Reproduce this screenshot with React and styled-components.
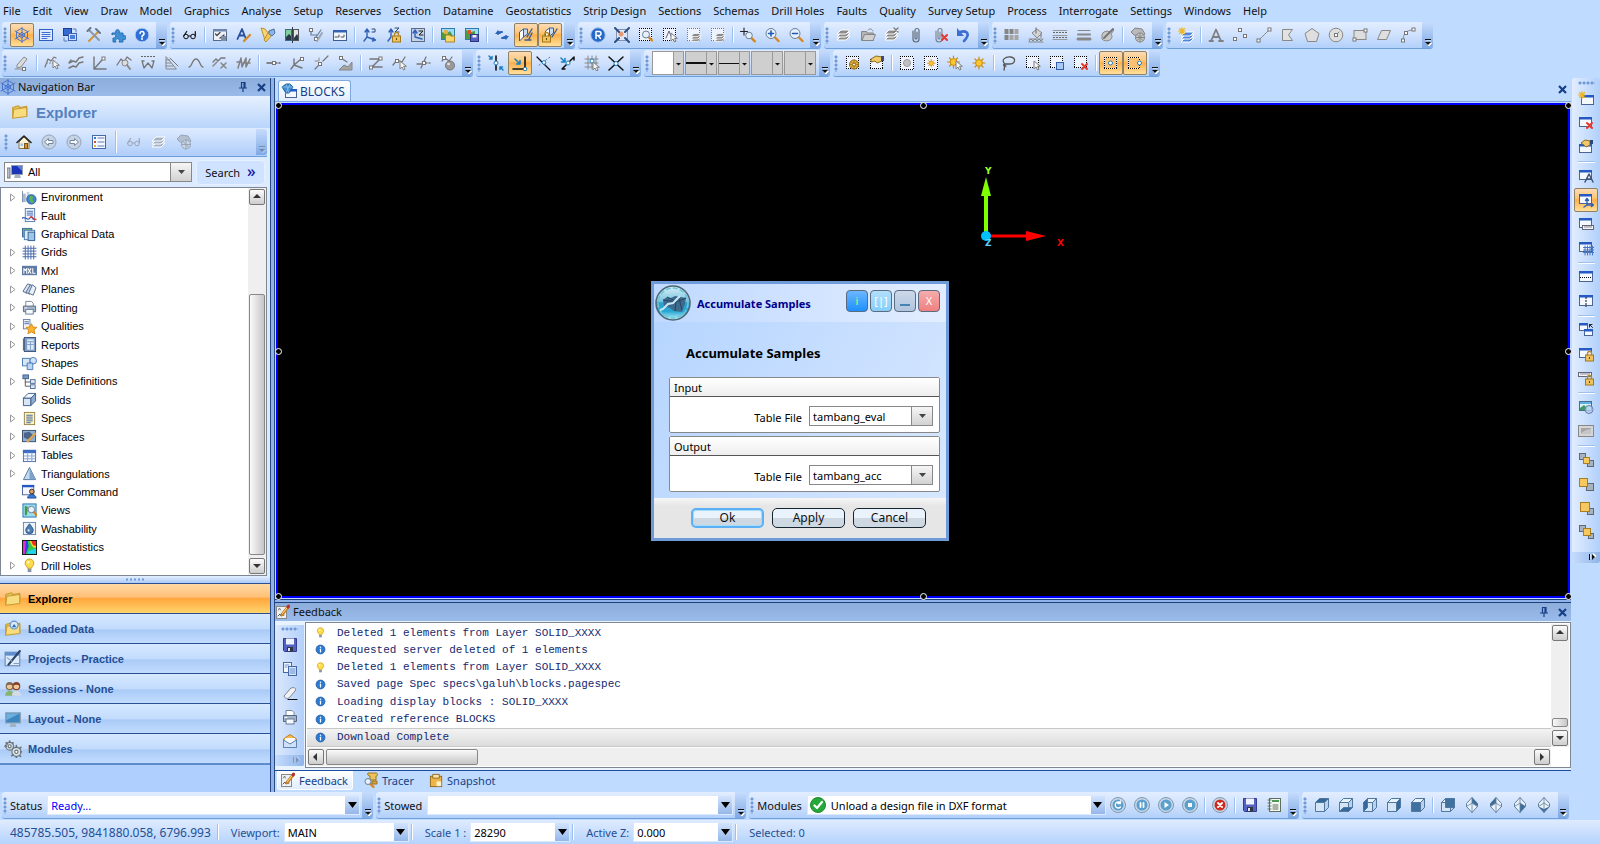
import React, { useState } from "react";
import styled, { createGlobalStyle, css } from "styled-components";

// small drawing helpers, every icon lives in a 16x16 box
const L = (d, c = "#8c8c8c", w = 1) => (
  <path d={d} fill="none" stroke={c} strokeWidth={w} strokeLinecap="round" strokeLinejoin="round" />
);
const F = (d, f, s = "none") => <path d={d} fill={f} stroke={s} strokeLinejoin="round" />;
const C = (x, y, r, f = "#fff", s = "none") => <circle cx={x} cy={y} r={r} fill={f} stroke={s} />;
const R = (x, y, w, h, f = "#fff", s = "none") => (
  <rect x={x} y={y} width={w} height={h} fill={f} stroke={s} />
);
const dots = (x, y, w, h, c = "#000") => (
  <>
    <rect x={x} y={y} width={w} height={h} fill="#eef4ff" stroke="#eef4ff" />
    <path
      d={`M${x - 0.5} ${y}h${w + 1}M${x - 0.5} ${y + h}h${w + 1}M${x} ${y + 1.5}v${h - 2}M${x + w} ${y + 1.5}v${h - 2}`}
      stroke={c}
      strokeDasharray="1 1"
    />
  </>
);
const win = (x = 1.5, y = 2.5, w = 12, h = 9) => (
  <>
    {R(x, y, w, h, "#f4f8ff", "#4a6496")}
    {R(x - 0.5, y - 0.5, w + 1, 2.5, "#2559c4")}
  </>
);
const lens = (x, y, r = 3.5) => (
  <>
    {L(`M${x + r * 0.7} ${y + r * 0.7}L${x + r + 2.5} ${y + r + 2.5}`, "#d9861c", 2.4)}
    {C(x, y, r, "#e4f0fb", "#6d7f93")}
  </>
);
const lock = (x = 6.5, y = 8) => (
  <>
    {L(`M${x + 2} ${y}v-1.5a2 2 0 0 1 4 0v1.5`, "#b58a2b", 1.4)}
    {R(x, y, 8, 6, "#eec35f", "#a47719")}
    {R(x + 3.5, y + 2, 1, 2, "#6b4a08")}
  </>
);
const cross = (x = 9, y = 9, c = "#e8382c") => L(`M${x} ${y}l5 5M${x + 5} ${y}l-5 5`, c, 2);
const pointer = (x = 8, y = 6) =>
  F(`M${x} ${y}v8l2-2 1.5 3 1.5-.8-1.4-2.9h2.8z`, "#f4f4f4", "#7f7f7f");
const layers = (c, y = 0) => (
  <>
    {F(`M1 ${13 + y}h9l4-4H5z`, c, "#fff")}
    {F(`M1 ${10 + y}h9l4-4H5z`, c, "#fff")}
    {F(`M1 ${7 + y}h9l4-4H5z`, c, "#fff")}
  </>
);
const star = (x, y, f = "#ffc531") => (
  <>
    {L(`M${x} ${y - 6}v12M${x - 6} ${y}h12M${x - 4} ${y - 4}l8 8M${x + 4} ${y - 4}l-8 8`, "#c98a12", 1.2)}
    {C(x, y, 3.4, f, "#c98a12")}
  </>
);
const spark = L("M4 .5v7M.5 4h7M1.5 1.5l5 5M6.5 1.5l-5 5", "#f0b51f", 1.1);
const node = (x, y, c = "#777") => R(x - 1.5, y - 1.5, 3, 3, "#fff", c);
const cube = (hi) => (
  <>
    {F("M1.5 5.5h9v9h-9z", hi === "front" ? "#41719f" : "#d4e5f6", "#50779f")}
    {F("M1.5 5.5l4-4h9l-4 4z", hi === "top" ? "#37689c" : "#e9f3fc", "#50779f")}
    {F("M10.5 5.5l4-4v9l-4 4z", hi === "right" ? "#37689c" : "#b9d1ea", "#50779f")}
    {hi === "bottom" && F("M1.5 14.5l4-4h9l-4 4z", "#37689c", "#50779f")}
    {hi === "left" && F("M1.5 5.5l4-4v9l-4 4z", "#37689c", "#50779f")}
    {hi === "back" && F("M5.5 1.5h9v9h-9z", "#41719f", "#50779f")}
  </>
);
const gem = (d) => (
  <>
    {F("M8 .5l5.5 6v3l-5.5 6-5.5-6v-3z", "#e8f1fa", "#64819d")}
    {F(d, "#3f6d99")}
    {L("M8 .5v15M2.500 9.5L8 6l5.500 3.500", "#64819d", 0.8)}
  </>
);
const disc = (c, inner) => (
  <>
    {C(8, 8, 7.5, "#c7d7e6", "#7f98b0")}
    {C(8, 8, 5.5, c)}
    {inner}
  </>
);
const folder = (c1 = "#f9dc7d", c2 = "#c79d35") => (
  <>
    {F("M1.5 13V4l5-1.5 1.5 1.5 6-1v8z", "#e9c25a", c2)}
    {F("M1.5 13.5l1-8 11.5-1.5v8z", c1, c2)}
  </>
);
const floppy = (
  <>
    {F("M1.5 1.5h13v13h-12l-1-1z", "#5462c4", "#343c90")}
    {R(4, 1.5, 8, 6, "#eef3ff")}
    {R(5, 10, 6, 4.5, "#30363f")}
    {R(6, 11, 2, 3, "#dfe5ee")}
  </>
);
const pad = (
  <>
    {R(1.5, 2.5, 10, 12, "#eef1f4", "#888")}
    {L("M3 12l2-2 1 2 3-1", "#555")}
    {L("M3.5 6l1-2 1 2", "#777")}
    {L("M7 10.5l6.5-8", "#c8812b", 3)}
    {L("M7.5 9.5l5.5-7", "#ffe08a", 1)}
    {L("M13 3l.6-.8", "#b8322c", 3)}
  </>
);
const person = (x, c, s) => (
  <>
    {F(`M${x - 4} 14c0-6 8-6 8 0z`, s)}
    {C(x, 5.5, 3, "#f0c699", c)}
    {F(`M${x - 3} 5a3 3 0 0 1 6 0c-2-1-4-1-6 0z`, c)}
  </>
);
const boxes = (a, b) => (
  <>
    {a.map(([x, y, s]) => <React.Fragment key={x}>{R(x, y, s, s, "#a9b3c0", "#5e6875")}</React.Fragment>)}
    {R(b[0], b[1], b[2], b[2], "#f7c760", "#a87e22")}
  </>
);
const wave = "M1 7l3-3 2 2 3-3 4 0";

const icons = {
  wheel: L("M8 1.5l5.5 3v7L8 14.5l-5.5-3v-7zM8 0v16M1 4l14 8M15 4L1 12M5 8l3-3 3 3-3 3z", "#3f6fd0", 0.9),
  console: <>{R(1.5, 2.5, 13, 11, "#dfeaff", "#2c5fc2")}{L("M4 5.5h8M4 7.5h8M4 9.5h8M4 11.5h5", "#3f6fd0")}</>,
  copywin: <>{R(1.5, 1.5, 8, 7, "#3769d2", "#1d3f90")}{R(6.5, 6.5, 8, 7, "#cfe0ff", "#3c62ad")}{R(8, 8, 5, 4, "#4c7fdf")}{L("M2 11v3h3M11 2h3v3", "#5b7db8")}</>,
  tools: <>{L("M3 14L12 5", "#d59234", 2)}{L("M3 3l10 10", "#8b98a8", 2)}{L("M1.5 4l3-3M10 2l4 4", "#6c7785", 2)}</>,
  puzzle: F("M2 6h4a2 2 0 1 1 3 0h4v3a2 2 0 1 1 0 3v3H9a2 2 0 1 0-3 0H3v-4a2 2 0 1 0-1-3z", "#3f8fd6", "#2a6fb0"),
  help: <>{C(8, 8, 7, "#2f6fd8", "#c6d8f2")}{L("M6 6.5a2 2 0 1 1 2.5 2L8 10", "#fff", 1.6)}{C(8, 12, 1)}</>,
  glasses: <>{C(4, 9.5, 2.3, "none", "#111")}{C(11, 9.5, 2.3, "none", "#111")}{L("M1.7 9l3-4.5M13.3 9V4.5M6.3 9h2.5", "#111", 1.2)}</>,
  glassesOff: <>{C(4, 9.5, 2.3, "none", "#9aa7ba")}{C(11, 9.5, 2.3, "none", "#9aa7ba")}{L("M1.7 9l3-4.5M13.3 9V4.5M6.3 9h2.5", "#9aa7ba", 1.2)}</>,
  checks: <>{R(1.5, 2.5, 13, 11, "#eef2f8", "#586a86")}{R(1, 2, 14, 2.5, "#6f86ad")}{L("M3.5 7l1.5 1.5 3-3M8 11l4-3", "#444", 1.3)}{R(9, 9, 5, 5, "#7d8ea8")}</>,
  apen: <>{L("M1.5 12L6 2l3.5 9M3 8.5h5", "#2a4d9b", 1.8)}{L("M8 14l6-6", "#d48b2a", 2.4)}</>,
  torch: <>{F("M1 1l4 1 4 5-4 6z", "#f8d674", "#b7912f")}{F("M9 4l5-2-2 6-6 7-2-2z", "#f3c95c", "#b7912f")}{F("M9 4l5-2 1 4-3 3-3-2z", "#8eb3e4", "#4e74ad")}</>,
  halfpic: <>{R(1.5, 2.5, 6, 11, "#7fd09a", "#3a6d8d")}{R(9.5, 2.5, 5, 11, "#dfe4ea", "#555")}{F("M2 10l3-3 2 2v4H2zM10 11l3-4 1 2v4h-4z", "#2a3a4a")}{L("M8.5 0v16", "#111", 0.8)}</>,
  branch: <>{L("M3 3v5h6M8 10l5-7", "#6b7b93", 1.2)}{node(3, 3)}{node(8, 12)}{L("M9 14l5-8", "#9aa5b5", 2)}</>,
  ruled: <>{R(1.5, 3.5, 13, 10, "#f2f7ff", "#3d5b8f")}{R(1, 3, 14, 2.5, "#3462b5")}{L("M3 10h4v-2M9 10h3v-2", "#555")}</>,
  axes: <>{L("M5 10V3M5 10l8 3M5 10l-3 4M3 5l2-3 2 3M11 11l2.5 2-3 1", "#2f61b7", 1.4)}{L("M10 2h3v3h-3", "#2b4778")}</>,
  axesLock: <>{L("M5 10V3M3 5l2-3 2 3M2 14l3-4", "#2f61b7", 1.4)}{L("M9 1h4L9 5h4", "#2b4778")}{lock(6.5, 9)}</>,
  axesBox: <>{R(1.5, 1.5, 13, 13, "#c4d3e8", "#5a6c88")}{L("M5 10V4M5 10l7 2M3 6l2-3 2 3", "#2f61b7", 1.4)}{L("M9 4h4L9 8h4", "#222")}</>,
  mapOpen: <>{R(1.5, 1.5, 13, 11, "#9fdcf4", "#2f7cae")}{F("M2 5l4 2 4-3 3 5v3H2z", "#4e9a43")}{R(4, 3, 4, 4, "#e0b23f")}{F("M5.5 15v-7h4l1 1h4v6z", "#f7d66d", "#ad8425")}</>,
  mapSave: <>{R(1.5, 1.5, 13, 11, "#9fdcf4", "#2f7cae")}{F("M2 3l5 2 4-1v8H2z", "#4e9a43")}{R(4, 3, 3, 4, "#d8552f")}{R(6.5, 7.5, 8, 7, "#5462c4", "#2d357e")}{R(8.5, 8, 4, 2.5, "#eef")}</>,
  sync: <>{L("M4 7c0-2 1-2 4-2M12 9c0 2-1 2-4 2", "#2c67b7", 2)}{F("M1 7h6l-3-4z", "#2c67b7")}{F("M9 9h6l-3 4z", "#2c67b7")}</>,
  solid: <>{F("M1.5 5l4-3v8l-4 4z", "#fff", "#3d5d92")}{F("M5.5 2h4v5l-4 3z", "#c9dcf7", "#3d5d92")}{L("M14 2l-5 8M14 6l-3 6M7 13h6", "#3d5d92", 1.4)}</>,
  solidLock: <>{F("M3.5 4l4-3v7l-4 3z", "#fff", "#3d5d92")}{F("M7.5 1h4v5l-4 3z", "#c9dcf7", "#3d5d92")}{L("M15 2l-5 8", "#3d5d92", 1.4)}{lock(0.5, 9)}</>,
  reset: <>{C(8, 8, 7.2, "#2468c9", "#9dbfe9")}{L("M6 11.5v-7h3a2 2 0 0 1 0 4H6M8 8.5l2.5 3", "#fff", 1.5)}</>,
  fit: <>{R(2.5, 2.5, 11, 11, "#dfe8f7", "#8193b1")}{C(7, 7, 2.5, "#e69a76")}{L("M1 1l4 4M15 1l-4 4M1 15l4-4M15 15l-4-4", "#2e4f86", 2)}</>,
  zoomBox: <>{dots(1.5, 1.5, 12, 12)}{lens(8, 7.5)}</>,
  pickBox: <>{dots(1.5, 1.5, 12, 12)}{L("M4 11l3-7 2 5", "#667")}{pointer(9, 6)}</>,
  layerBox: <>{dots(1.5, 1.5, 12, 12, "#777")}<g transform="translate(4 4) scale(.8)">{layers("#888")}</g></>,
  zoomWin: <>{L("M4 1v7M.5 4.5h7", "#222", 1.1)}{lens(9, 8.5, 3.3)}</>,
  zoomIn: <>{lens(7, 6.5, 5)}{L("M7 4v5M4.5 6.5h5", "#2159b6", 1.6)}</>,
  zoomOut: <>{lens(7, 6.5, 5)}{L("M4.5 6.5h5", "#2159b6", 1.6)}</>,
  layersOff: layers("#8b8b8b"),
  openOff: <>{F("M1.5 13.5v-9h5l1 1.5h6v7.5z", "#b5b5b5", "#868686")}{F("M2 13.5l2.5-6h11l-2.5 6z", "#d0d0d0", "#868686")}{L("M8 3c2-2 4-1 5 1", "#868686")}</>,
  layersX: <>{layers("#8b8b8b")}{L("M10 1l4 4M14 1l-4 4", "#777", 1.3)}</>,
  clip: L("M5 4v8a3 3 0 0 0 6 0V3.5a2 2 0 0 0-4 0V11a1 1 0 0 0 2 0V5", "#5e6a79", 1.2),
  clipX: <>{L("M4 4v8a3 3 0 0 0 6 0V3.5a2 2 0 0 0-4 0V11a1 1 0 0 0 2 0V5", "#77808c", 1.1)}{cross(10, 8)}</>,
  undo: <>{L("M4 5c6-2 9 1 7 5-1 2-2 3-3 4", "#3c6fd2", 2.6)}{F("M1 1v8h7z", "#3c6fd2")}</>,
  grid9: [0, 5, 10].map((x) => [2, 8].map((y) => <rect key={x + "-" + y} x={x + 0.5} y={y} width="4" height="5" fill={x + y > 10 ? "#a5a5a5" : "#858585"} />)),
  bucket: <>{F("M4 6l5-4 5 4-5 5z", "#d3d3d3", "#858585")}{L("M8 6V1M13 7v3", "#858585", 1.3)}{L("M1 14l2-2 2 2 2-2 2 2 2-2 2 2 2-2M1 12h13M1 15h14", "#858585", 1)}</>,
  dashes: <>{L("M1 3.5h14M1 8.5h14M1 12.5h14", "#999")}<path d="M1 5.5h14M1 10.5h14" stroke="#666" strokeDasharray="2 1" /></>,
  thick: <>{L("M2 3.5h12", "#888", 1)}{L("M2 7.5h12", "#888", 2)}{L("M2 12h12", "#888", 3)}</>,
  brush: <>{F("M2 8a5 4 0 0 1 8-3l3-3 1 1-3 4a5 4 0 0 1-9 5z", "#c9c9c9", "#888")}{L("M4 11l9-9", "#777", 2)}</>,
  handOff: <>{F("M1 5l4-4 7 1 3 5-3 2-8-1z", "#b9b9b9", "#858585")}{C(10, 10.5, 4.5, "#ccc", "#858585")}{L("M10 6v9M5.5 10.5h9M7 7.5l6 6M13 7.5l-6 6", "#858585")}</>,
  newLayer: <><g transform="translate(2 2)">{layers("#4e86de")}</g>{spark}</>,
  textA: L("M3 14L8 2.5 13 14M5 10h6M1.5 14h3.5M11 14h4", "#808080", 1.8),
  points: <>{node(8, 3)}{node(3, 12)}{node(13, 9)}</>,
  segment: <>{L("M2 14L14 2")}{node(2.5, 13.5)}{node(13.5, 2.5)}</>,
  polyFlag: F("M2.5 2.5h10l-4 5.5 4 5.5h-10z", "#e2e2e2", "#888"),
  pentagon: F("M8 1.5l7 5-2.5 8h-9L1 6.5z", "#dedede", "#888"),
  circle: <>{C(8, 8, 6.8, "#dedede", "#888")}{L("M8 8l3-3")}{node(8, 8)}</>,
  rect: <>{R(2, 3.5, 12, 9, "#dedede", "#888")}{node(2.5, 12.5)}{node(13.5, 3.5)}</>,
  para: F("M1.5 12.5l4-9h9l-4 9z", "#dedede", "#888"),
  arc: <>{L("M3 14C3 7 6 3 13 3")}{node(3, 13.5)}{node(6, 6)}{node(13.5, 2.5)}</>,

  pencil: <>{F("M3 10L10 2l3 2-6 8-4 1z", "#ddd", "#888")}{L("M1 14h9")}{node(10, 14)}</>,
  pickLine: <>{L("M1 12l3-8 3 2 3-4 2 1", "#777", 1.2)}<path d="M2 8h10" stroke="#888" strokeDasharray="2 1" />{pointer(9, 5)}</>,
  waves: L("M1 8l4-2 3 1 3-4 4-1M1 13l4-2 3 1 3-4 4-1M1 8l2-3", "#777", 1.4),
  angle: <>{L("M2 2v12h12M2 14l8-9", "#777", 1.4)}{node(11.5, 3.5)}</>,
  lineZoom: <>{L("M1 10l4-6 3 3 3-5 4 3", "#777", 1.3)}{C(9, 8, 3, "#ddd", "#888")}{L("M11 10l3 4", "#888", 2)}</>,
  wdots: <><path d="M1 1.5h14" stroke="#666" strokeDasharray="2 1" />{L("M2 6l2 7 4-5 4 5 2-7M2 6h2M12 6h2", "#777", 1.3)}</>,
  eTri: <>{L("M2 2v12h10zM2 5h4M2 8h5M2 11h7", "#888")}{L("M6 3l8 8", "#777")}</>,
  sine: L("M1 12C4 12 4 4 8 4s4 8 7 8", "#777", 1.3),
  lineX: <>{L(wave, "#777", 1.3)}{L("M9 8l5 5M14 8l-5 5M1 11l4-4", "#888", 1.5)}</>,
  scribble: L("M2 13L5 3l1 9 4-9v9l4-8M1 7h4M7 8h7", "#808080", 1.5),
  ptDash: <>{L("M1 8h5M10 8h1M13 8h1", "#666", 1.5)}{node(8, 8)}</>,
  ptAxes: <>{L("M4 10V4M4 10l8 3M4 10l-3 4M4 10l7-6", "#777", 1.4)}{node(12, 4)}</>,
  ptDiag: <>{L("M1 14l6-6M9 6l5-5", "#777", 1.2)}{node(6, 9)}{L("M1 6h4v-3")}</>,
  ptHill: <>{L("M3 3l6 4", "#777", 1.2)}{node(3, 3)}{F("M1 15l5-5 4 2 4-5v8z", "#a5a5a5", "#858585")}</>,
  zShape: <>{L("M2 4h10L4 12h10", "#777", 1.5)}{node(12.5, 3.5)}{node(3, 12.5)}</>,
  ptPick: <>{L("M1 10l4-5 5 2 3-5", "#777", 1.3)}{node(5, 6)}{pointer(8, 6)}</>,
  ptBack: <>{L("M1 9h5M10 8h1M13 8h1M10 2L5 13", "#777", 1.3)}{node(8, 8)}</>,
  bomb: <>{L("M2 6l3-3 4 3 3-4", "#777", 1.2)}{node(4, 3)}{C(10, 10.5, 4.5, "#999", "#777")}{C(8.5, 9, 1.3, "#e8e8e8")}</>,

  snapV: <>{L("M8 1v14", "#111", 1.6)}{L("M1 1l3 3M15 15l-3-3M4 1.5V4H1.5M12 14.5V12h2.5", "#1a7fc0", 1.5)}{C(8, 8, 2, "#fff", "#1a7fc0")}</>,
  snapCorner: <>{L("M1 14h12V2", "#111", 1.6)}{L("M3 4l5 5M8 5.5V9H4.5", "#1a7fc0", 1.5)}{C(13, 14, 1.8, "#fff", "#1a7fc0")}</>,
  snapX: <>{L("M1 2l13 13", "#111", 1.3)}<path d="M14 2L2 11" stroke="#5576a8" strokeDasharray="2 2" />{C(8, 7.5, 1.8, "#fff", "#1a7fc0")}</>,
  snapLine: <>{L("M2 14L14 2M2 14h3M14 2v3", "#111", 1.5)}{L("M1 3l4 4M5 3.5V7H1.5", "#1a7fc0", 1.5)}{C(8, 8, 2, "#fff", "#1a7fc0")}</>,
  snapGrid: <>{L("M4 1v13M8 1v13M12 1v10M1 4h13M1 8h13M1 12h9", "#888")}{C(8, 6, 2, "#fff", "#1a7fc0")}{pointer(9, 7)}</>,
  snapInt: <>{L("M1 2l14 13M15 2L1 15", "#111", 1.5)}{C(8, 8.5, 2, "#fff", "#1a7fc0")}</>,

  selGear: <>{dots(1.5, 1.5, 12, 12)}{C(9, 9.5, 4.5, "#e6b545", "#8f6a15")}{L("M9 5v9M4.5 9.5h9M6 6.5l6 6M12 6.5l-6 6", "#8f6a15", 0.7)}{C(9, 9.5, 1.5, "#fff8e0", "#8f6a15")}</>,
  selHand: <>{dots(1.5, 4.5, 12, 9)}{F("M2 4l5-3 6 1v4l-5 2-2-2-4 1z", "#f2c968", "#8e6d1e")}{R(12, 1, 3, 5, "#3a4d72")}</>,
  selOff: <>{dots(1.5, 1.5, 13, 13)}{C(8, 8, 3.5, "#c2c2c2", "#999")}</>,
  selSun: <>{dots(1.5, 1.5, 13, 13)}<g transform="translate(3 3) scale(.65)">{star(8, 8)}</g></>,
  sunPick: <>{star(6.5, 7)}{pointer(9, 6)}</>,
  sun: star(8, 8),
  lasso: <>{L("M4 9C-1 5 5 1 10 2s5 7-2 7H4c-2 0-2 3 1 2", "#555", 1.3)}{L("M4 10l-1 5", "#555", 1.3)}</>,
  selPick: <>{dots(1.5, 1.5, 12, 11)}{pointer(9, 6)}</>,
  selPage: <>{dots(1.5, 1.5, 12, 11)}{R(7.5, 7.5, 7, 7, "#a9c9f4", "#2f5fae")}</>,
  selDel: <>{dots(1.5, 1.5, 12, 11)}{cross(9, 9)}</>,
  selMid: <>{dots(1.5, 2.5, 12, 11)}{R(2, 3, 11, 10, "#fdc173")}{C(7.5, 8, 2, "#fff", "#1a7fc0")}</>,
  selEdge: <>{dots(1.5, 2.5, 11, 11)}{R(2, 3, 10, 10, "#fdc173")}{C(12.5, 8, 2, "#fff", "#1a7fc0")}</>,

  winNew: <>{win(3.5, 4.5, 12, 9)}{spark}</>,
  winDel: <>{win()}{cross(9, 8)}</>,
  winHand: <>{win(1.5, 5.5, 12, 8)}{F("M3 4l4-3 5 1v4l-4 2-2-2z", "#f2c968", "#8e6d1e")}{R(12, 1, 3, 4, "#2c4677")}</>,
  winA: <>{win()}{L("M7 14l4-8 4 8M9 11h4", "#3d5277", 1.5)}</>,
  winAxes: <>{win()}{L("M9 13V7M9 13h6M9 13l-3 2M7.5 8.5L9 6.5l1.5 2M13.5 11.5l2 1.5-2 1.5", "#2f5fb5", 1.4)}</>,
  winRule: <>{win()}{R(4.5, 9.5, 11, 4, "#f3f5f8", "#667")}{L("M7 10v1.5M9 10v1.5M11 10v1.5M13 10v1.5", "#667", 0.8)}</>,
  winGrid: <>{win()}{L("M7 6v9M9.5 6v9M12 6v9M14.5 6v9M5.5 7.5H16M5.5 10H16M5.5 12.5H16", "#4874c6", 1)}</>,
  winH: <>{win(1.5, 2.5, 13, 10)}<path d="M2 8.5h12" stroke="#111" strokeDasharray="1 1" /></>,
  winV: <>{win(1.5, 2.5, 13, 10)}<path d="M8 4v10" stroke="#111" strokeDasharray="2 1" /></>,
  winPair: <>{win(1.5, 1.5, 8, 7)}{win(6.5, 7.5, 8, 6)}{L("M14.5 5.5L11.5 2.5M11.5 5V2.500H14", "#223")}</>,
  winLock: <>{win()}{lock(7.5, 9)}</>,
  ruleLock: <>{R(0.5, 2.5, 13, 4, "#f3f5f8", "#667")}{L("M3 3v1.5M5 3v1.5M7 3v1.5M9 3v1.5M11 3v1.5", "#667", 0.8)}{lock(7.5, 9)}</>,
  picRoll: <>{R(1.5, 2.5, 12, 9, "#d8f0f6", "#4a6c8a")}{F("M2 9l4-3 3 3v2H2z", "#3f9b65")}{F("M2 3h11v2H2z", "#5db1e0")}{C(11, 10.5, 4, "rgba(180,205,240,.8)", "#6580a8")}</>,
  picOff: <>{R(0.5, 2.5, 15, 11, "#d5d5d5", "#888")}{R(3, 5, 10, 6, "#a6a6a6")}{F("M3 10l5-3 5-1v5H3z", "#c5c5c5")}</>,
  order1: boxes([[1.5, 1.5, 6], [9.5, 8.5, 6]], [5.5, 5.5, 6]),
  order2: boxes([[8.5, 7.5, 7]], [1.5, 2.5, 8]),
  order3: boxes([[9.5, 8.5, 6]], [2.5, 2.5, 9]),
  order4: boxes([[1.5, 1.5, 6], [10.5, 9.5, 5]], [5.5, 4.5, 7]),

  env: <>{R(1, 4, 3, 9, "#a8b9cc")}{R(5, 2, 3, 8, "#c3d0de")}{R(0, 1, 1, 12, "#7c8fa6")}{C(10, 10, 5, "#3f86d2", "#2a5f9d")}{F("M8 6l4 1-1 3 2 3-3 1-2-4z", "#62b24e")}</>,
  fault: <>{R(3.5, 0.5, 10, 14, "#f0f5fc", "#5b7bab")}{L("M5.5 3.5h6M5.5 5.5h6M5.5 7.5h6", "#3f6bb5")}{L("M0 11c3-3 5 3 8 0s3 0 4 1", "#2f5fb5", 1.3)}{L("M9 10c2-3 3 4 6 2", "#d23c3c", 1.4)}</>,
  graph: <>{R(0.5, 1.5, 10, 9, "#72b27a", "#3c6a98")}{R(2.5, 3.5, 11, 10, "#dcebfa", "#4c7bb4")}{R(6.5, 5.5, 7, 9, "#9ec6ea", "#36608f")}</>,
  grids: L("M3.5 1v14M6.5 1v14M9.5 1v14M12.5 1v14M1 3.5h14M1 6.5h14M1 9.5h14M1 12.5h14", "#4468a8", 1),
  mxl: <>{R(0, 3, 16, 10, "#5f7ba3")}{L("M2 11V6l1.5 2L5 6v5M6.5 6L9.5 11M9.5 6L6.5 11M11.5 6v5h2.5", "#fff", 1.1)}</>,
  planes: <>{F("M1 10l5-8 3 1-4 9z", "#dce6f3", "#556b8c")}{F("M4 11l5-8 3 1-4 9z", "#c4d3e6", "#556b8c")}{F("M7 12l4-9 4 3-3 8z", "#e6effa", "#556b8c")}</>,
  print: <>{F("M4 7V1.5h6l2 2V7z", "#fff", "#758699")}{F("M1.5 6.5h13v6h-13z", "#a4b5ca", "#566880")}{R(4, 10, 8, 5, "#f6f9fd", "#667c96")}{L("M3 8.5h2", "#fff")}</>,
  quality: <>{R(1.5, 0.5, 7, 10, "#eef3fa", "#6c84a6")}{L("M3 3h4M3 5h4", "#4d6fa8")}{F("M10 5l1.8 3.6 4 .4-3 2.7.9 4L10 13.8 6.3 15.7l.9-4-3-2.7 4-.4z", "#fbb431", "#d48813")}</>,
  report: <>{R(2.5, 0.5, 12, 15, "#7e9dc6", "#3b5478")}{R(5.5, 2.5, 7, 11, "#dfeaf7")}{L("M1.5 2v12", "#555", 1)}{L("M6 5h6M6 8h6M9 5v8", "#7f9cc2")}</>,
  shapes: <>{R(0.5, 2.5, 8, 8, "#d6e6f7", "#4a78b4")}{C(12, 5, 3.5, "#cfe2f7", "#4a78b4")}{F("M5.5 7.5h6v7h-6z", "#bcd7f2", "#4a78b4")}</>,
  side: <>{R(1, 1, 6, 4, "#7797c4", "#42628f")}{L("M3.5 5v8h5M3.5 8.5h5", "#555")}{R(9, 6, 5, 4, "#dbe7f6", "#556f96")}{R(9, 11.5, 5, 4, "#dbe7f6", "#556f96")}</>,
  solids: <>{F("M1.5 6.5h8v8h-8z", "#d9e6f5", "#3f5f8c")}{F("M1.5 6.5l5-5h8l-5 5z", "#f0f6fd", "#3f5f8c")}{F("M9.5 6.5l5-5v8l-5 5z", "#8eabcf", "#3f5f8c")}</>,
  specs: <>{R(2.5, 1.5, 11, 13, "#fff6b8", "#948448")}{L("M5 4.5h6M5 6.5h6M5 8.5h6M5 10.5h6M5 12.5h4", "#3b5fb0")}</>,
  surf: <>{R(0.5, 1.5, 14, 12, "#8faed3", "#3c4f6b")}{F("M2 4l6-1 5 5-5 4-6-3z", "#4b6488")}{L("M6 13l8-8", "#e2a54a", 2.4)}</>,
  table: <>{R(1.5, 2.5, 13, 12, "#f4f8ff", "#4a6da8")}{R(1, 2, 14, 3.5, "#3d6cc4")}{L("M2 8.5h12M2 11.5h12M6 5v9M10.5 5v9", "#7d9ccd", 0.9)}</>,
  tri: <>{F("M8 1.5l6.5 13h-13z", "#c2d9f0", "#51769f")}{F("M8 2l6 12H8z", "#7fa3ca")}</>,
  user: <>{R(0.5, 1.5, 12, 10, "#f3f7ff", "#4a6496")}{R(0, 1, 13, 2.5, "#2559c4")}{F("M6 15c0-5 9-5 9 0z", "#3878d8", "#254f96")}{C(10.5, 8, 2.5, "#d99d6b", "#3a2a20")}</>,
  views: <>{R(1, 1, 14, 14, "#9bdcf2", "#2174ae")}{F("M3 3l3 1v4l-1 5H3z", "#419b3a")}{F("M7 4l2-1v4z", "#e2b135")}{lens(10, 7, 3.5)}</>,
  wash: <>{R(1.5, 1.5, 13, 13, "#ecf2fa", "#6685b4")}{F("M8 3c3 4 4 5 4 7a4 3.5 0 0 1-8 0c0-2 1-3 4-7z", "#4f7cb0", "#2f5583")}{C(7, 10, 1.2, "#d9e9f8")}</>,
  geo: <>{R(0, 0, 16, 16, "#101010")}{R(1, 1, 14, 14, "#32c846")}{F("M1 1h3l1 6-1 8H1z", "#e02be0")}{F("M4 1h2l1 6-3 8H3z", "#2348e0")}{F("M6 15c0-5 4-4 9-6v6z", "#22d3e6")}{F("M8 1h7v7c-3 1-4-1-7-7z", "#f1d72d")}{F("M10 1h5v5c-3 0-4-1-5-5z", "#ef2e1d")}</>,
  bulb: <>{F("M8 1a4.5 4.5 0 0 1 3 8l-1 2H6L5 9a4.5 4.5 0 0 1 3-8z", "#fddc4b", "#cf9e1c")}{R(6, 11.5, 4, 3.5, "#8a94a3")}{C(6.7, 4.5, 1.3, "#fff8cf")}</>,
  info: <>{C(8, 8, 6.5, "#2a7ad2", "#1b57a0")}{L("M8 7.5v4", "#fff", 1.8)}{C(8, 4.7, 1.1)}</>,

  folder: folder(),
  folderUp: <>{folder()}{C(9, 4.5, 3.5, "#d6e8fa", "#5b92cf")}{F("M9 3.5l2 3H7z", "#2d6ab8")}</>,
  project: <>{R(1, 2, 13, 12, "#dceafa", "#6a8ab5")}{R(1, 2, 13, 3, "#5f8fce")}{L("M4 13l10-12", "#2e4566", 2)}{L("M3 7l4 3M9 12h4", "#7f9fc8")}</>,
  people: <>{person(5, "#7c6a4d", "#8ab36b")}{person(11, "#8a3f2a", "#d3dbe4")}</>,
  monitor: <>{R(1.5, 2.5, 13, 9, "#3e86c0", "#8aa0b4")}{F("M2 3h12l-12 6z", "#6eaedc")}{F("M6 12h4l1 3H5z", "#9fb2c4")}</>,
  gears: <>{C(5, 5.5, 3.5, "#cbd4d8", "#66747b")}{C(5, 5.5, 1.3, "#fff", "#66747b")}{C(11, 10.5, 4, "#dde4e7", "#66747b")}{C(11, 10.5, 1.5, "#fff", "#66747b")}{L("M5 1v1M1 5.5h1M2 2.5l1 1M8 2.5L7.5 3M11 6v-1M15 10.5h1M14 7.5l1-1M14 14l.6.6M11 15v1M7 14l1-1", "#66747b", 1.5)}</>,
  home: <>{F("M3 8v6.5h10V8L8 3z", "#f7f1d8", "#8b7445")}{L("M1 8.5L8 2l7 6.5", "#222", 1.6)}{R(8.5, 9.5, 3, 5, "#d8902d", "#7d5317")}{R(4.5, 9.5, 2.5, 2.5, "#9cc3ea")}</>,
  back: <>{C(8, 8, 7, "#c6d3e4", "#94a4b9")}{F("M3.5 8l4-3.5v2h4.5v3H7.5v2z", "#f4f8fd", "#75869d")}</>,
  next: <>{C(8, 8, 7, "#c6d3e4", "#94a4b9")}{F("M12.5 8l-4-3.5v2H4v3h4.5v2z", "#f4f8fd", "#75869d")}</>,
  list: <>{R(1.5, 1.5, 13, 13, "#f5f9ff", "#4569ad")}{R(3, 3, 2, 2, "#3c6fd0")}{R(3, 7, 2, 2, "#d54a33")}{R(3, 11, 2, 2, "#e8b327")}{L("M7 4h6M7 8h6M7 12h6", "#5d7cb5")}</>,
  layersPale: layers("#a5b2c6"),
  handPale: <>{F("M1 5l4-4 7 1 3 5-3 2-8-1z", "#b4bfcf", "#97a5ba")}{C(10, 10.5, 4.5, "#ccd5e2", "#97a5ba")}{L("M10 6v9M5.5 10.5h9M7 7.5l6 6", "#97a5ba")}</>,
  computer: <>{R(0, 4, 3, 10, "#b6bfc9", "#6f7a86")}{R(4.5, 1.5, 11, 9, "#1c34b8", "#93a0b0")}{F("M10 2h5v5z", "#5b7bea")}{F("M8 11h5l1 3H7z", "#a7b1bd")}</>,
  blocks: <>{win(4.5, 6.5, 11, 8)}{F("M1 4l4-3h4l3 3-4 6H5z", "#3f8fd4", "#1f5d99")}{L("M1 4h11M5 1l3 9M9 1L5 10", "#8fc3ee", 0.7)}</>,
  floppy,
  copy: <>{R(1.5, 1.5, 8, 10, "#f2f7ff", "#4468a8")}{R(6.5, 5.5, 8, 9, "#d6e5fb", "#4468a8")}{L("M3 4h4M3 6h2M8 8h5M8 10h5M8 12h5", "#5f84c4", 0.9)}</>,
  eraser: <>{F("M2 11l7-8c3-1 6 0 4 3l-6 7c-2 1-5 0-5-2z", "#f2f3f5", "#7e8794")}{L("M6 14.5h9", "#111", 1.2)}</>,
  mail: <>{F("M1.5 6L8 1.5 14.5 6v8.5h-13z", "#f7b84e", "#c07f1d")}{R(3, 5, 10, 5, "#f5f8fc")}{F("M1.5 7l6.5 4 6.5-4v7.5h-13z", "#cfe1f7", "#5d84ba")}</>,
  pad,
  tracer: <>{F("M5 1h8c2 0 2 3 0 3v4H7V4C5 4 4 2 5 1z", "#ecc25a", "#9b7420")}{lens(5, 9.5, 3)}{F("M9 9h5v3H9z", "#d5a238", "#9b7420")}</>,
  clipboard: <>{R(1.5, 3.5, 12, 11, "#eeb445", "#96691a")}{F("M4 1.5h7v4H4z", "#f9e2a4", "#8f6a22")}{F("M8 9h5v5H8z", "#fff2c9")}</>,
  tick: <>{C(8, 8, 7.5, "#27a83b", "#1a8a2c")}{L("M4.5 8.5l2.5 2.5 5-6", "#fff", 2.2)}</>,
  redo: disc("#5a9fce", L("M10.5 6a3 3 0 1 0 0 4M10.5 4v2.5H8", "#fff", 1.3)),
  pause: disc("#5a9fce", L("M6.5 6v4M9.5 6v4", "#fff", 1.8)),
  play: disc("#5a9fce", F("M6.5 5v6l4.5-3z", "#fff")),
  stop: disc("#5a9fce", R(6, 6, 4, 4)),
  abort: disc("#cf2a1f", L("M6 6l4 4M10 6l-4 4", "#fff", 1.9)),
  book: <>{R(3.5, 1.5, 11, 13, "#f2f7f0", "#5d6f63")}{R(6, 3, 7, 2, "#4b9a57")}{L("M2 3h3M2 6h3M2 9h3M2 12h3M7 8h5M7 10h5M7 12h5", "#5d6f63")}</>,
  cubeTop: cube("top"),
  cubeBottom: cube("bottom"),
  cubeLeft: cube("left"),
  cubeRight: cube("right"),
  cubeFront: cube("front"),
  cubeBack: cube("back"),
  gem1: gem("M8 .5l5.5 6v3L8 6z"),
  gem2: gem("M8 .5l-5.5 6v3L8 6z"),
  gem3: gem("M8 15.5l5.500-6L8 6z"),
  gem4: gem("M8 15.5l-5.500-6L8 12l5.500-2.500z"),
};

const Icon = ({ name, size = 16 }) => (
  <svg width={size} height={size} viewBox="0 0 16 16" aria-hidden="true">
    {icons[name]}
  </svg>
);

const menus = [
  "File", "Edit", "View", "Draw", "Model", "Graphics", "Analyse", "Setup", "Reserves", "Section",
  "Datamine", "Geostatistics", "Strip Design", "Sections", "Schemas", "Drill Holes", "Faults",
  "Quality", "Survey Setup", "Process", "Interrogate", "Settings", "Windows", "Help",
];

const topBars = [
  [["wheel", "console", "copywin", "tools", "puzzle", "help"]],
  [
    ["glasses"],
    ["checks", "apen", "torch", "halfpic", "branch", "ruled"],
    ["axes", "axesLock", "axesBox"],
    ["mapOpen", "mapSave"],
    ["sync", "solid", "solidLock"],
  ],
  [["reset", "fit", "zoomBox", "pickBox", "layerBox", "layerBox"], ["zoomWin", "zoomIn", "zoomOut"]],
  [["layersOff", "openOff", "layersX", "clip", "clipX", "undo"]],
  [["grid9", "bucket", "dashes", "thick", "brush"], ["handOff"]],
  [["newLayer"], ["textA", "points", "segment", "polyFlag", "pentagon", "circle", "rect", "para", "arc"]],
];

const editBar = [
  ["pencil"],
  ["pickLine", "waves", "angle", "lineZoom", "wdots", "eTri", "sine", "lineX", "scribble"],
  ["ptDash", "ptAxes", "ptDiag", "ptHill"],
  ["zShape", "ptPick", "ptBack", "bomb"],
];
const snapBar = [["snapV", "snapCorner", "snapX", "snapLine", "snapGrid", "snapInt"]];
const selectBar = [
  ["selGear", "selHand"],
  ["selOff", "selSun", "sunPick", "sun"],
  ["lasso", "selPick", "selPage", "selDel"],
  ["selMid", "selEdge"],
];
const windowBar = [
  ["winNew", "winDel", "winHand"],
  ["winA", "winAxes", "winRule", "winGrid"],
  ["winH", "winV"],
  ["winPair", "winLock", "ruleLock"],
  ["picRoll", "picOff"],
  ["order1", "order2", "order3", "order4"],
];
const moduleBar = [["redo", "pause", "play", "stop"], ["abort"], ["floppy", "book"]];
const cubeBar = [
  ["cubeTop", "cubeBottom", "cubeLeft", "cubeRight", "cubeFront"],
  ["cubeBack", "gem1", "gem2", "gem3", "gem4"],
];
const pressed = ["wheel", "solid", "solidLock", "snapCorner", "selMid", "selEdge", "winAxes"];

const tree = [
  ["Environment", "env", true],
  ["Fault", "fault"],
  ["Graphical Data", "graph"],
  ["Grids", "grids", true],
  ["Mxl", "mxl", true],
  ["Planes", "planes", true],
  ["Plotting", "print", true],
  ["Qualities", "quality", true],
  ["Reports", "report", true],
  ["Shapes", "shapes"],
  ["Side Definitions", "side", true],
  ["Solids", "solids"],
  ["Specs", "specs", true],
  ["Surfaces", "surf", true],
  ["Tables", "table", true],
  ["Triangulations", "tri", true],
  ["User Command", "user"],
  ["Views", "views"],
  ["Washability", "wash"],
  ["Geostatistics", "geo"],
  ["Drill Holes", "bulb", true],
];

const sections = [
  ["Explorer", "folder"],
  ["Loaded Data", "folderUp"],
  ["Projects - Practice", "project"],
  ["Sessions - None", "people"],
  ["Layout - None", "monitor"],
  ["Modules", "gears"],
];

const log = [
  ["bulb", "Deleted 1 elements from Layer SOLID_XXXX"],
  ["info", "Requested server deleted of 1 elements"],
  ["bulb", "Deleted 1 elements from Layer SOLID_XXXX"],
  ["info", "Saved page Spec specs\\galuh\\blocks.pagespec"],
  ["info", "Loading display blocks : SOLID_XXXX"],
  ["info", "Created reference BLOCKS"],
  ["info", "Download Complete"],
];

const Overflow = ({ vertical, faded }) => (
  <More $vertical={vertical} aria-label="More buttons">
    <svg width="8" height="8" viewBox="0 0 8 8" aria-hidden="true" opacity={faded ? 0.25 : 1}>
      <g transform={vertical ? "rotate(-90 4 4)" : undefined}>
        <path d="M2 2h5M2.5 5h5L5 8z" stroke="#fff" fill="#fff" />
        <path d="M1 1.5h6" stroke="#111" />
        <path d="M1 4h6L4 7z" fill="#111" />
      </g>
    </svg>
  </More>
);

const Buttons = ({ groups, vertical }) =>
  groups.map((group, i) => (
    <React.Fragment key={i}>
      {i > 0 && <Rule $vertical={vertical} />}
      {group.map((name, n) => (
        <Tool key={n} aria-label={name} $on={pressed.includes(name)}>
          <Icon name={name} />
        </Tool>
      ))}
    </React.Fragment>
  ));

const Combo = ({ id, value, width, grow, color, soft, icon }) => (
  <Field $width={width} $grow={grow} $soft={soft} $color={color}>
    {icon && <Icon name={icon} />}
    <select id={id} aria-label={id} defaultValue={value}>
      <option>{value}</option>
    </select>
    <i>
      <svg width="9" height="6" viewBox="0 0 9 6" aria-hidden="true">
        <path d={soft ? "M1 1h7L4.5 5z" : "M0 0h9L4.5 6z"} fill={soft ? "#444" : "#000"} />
      </svg>
    </i>
  </Field>
);

const arrows = { up: "M0 5l4-4 4 4z", down: "M0 2l4 4 4-4z", left: "M5 0L1 4l4 4z", right: "M2 0l4 4-4 4z" };
const Arrow = ({ dir }) => (
  <ScrollButton aria-label={"Scroll " + dir}>
    <svg width="8" height="8" viewBox="0 0 8 8" aria-hidden="true">
      <path d={arrows[dir]} fill="#333" />
    </svg>
  </ScrollButton>
);

const ScrollBar = ({ horizontal, before, size, after }) => (
  <Track $horizontal={horizontal}>
    <Arrow dir={horizontal ? "left" : "up"} />
    <Space $grow={before} />
    <Thumb $grow={size} $horizontal={horizontal} />
    <Space $grow={after} />
    <Arrow dir={horizontal ? "right" : "down"} />
  </Track>
);

const Close = () => (
  <GlyphButton aria-label="Close">
    <svg width="9" height="9" viewBox="0 0 9 9" aria-hidden="true">
      <path d="M1 1l7 7M8 1L1 8" stroke="#173f86" strokeWidth="2.2" />
    </svg>
  </GlyphButton>
);
const PinClose = () => (
  <>
    <GlyphButton aria-label="Pin">
      <svg width="10" height="12" viewBox="0 0 10 12" aria-hidden="true">
        <path d="M3 1.5h4v5M3.5 1v6M6 1v6M1 7h8M5 7v4" fill="none" stroke="#173f86" strokeWidth="1.2" />
      </svg>
    </GlyphButton>
    <Close />
  </>
);

function Dialog() {
  return (
    <DialogFrame role="dialog" aria-label="Accumulate Samples">
      <DialogTitle>
        <svg width="36" height="36" viewBox="0 0 36 36" aria-hidden="true">
          <defs>
            <linearGradient id="orb" x2="0" y2="1">
              <stop offset="0" stopColor="#d9f0fa" />
              <stop offset=".45" stopColor="#7cc4de" />
              <stop offset=".5" stopColor="#2aa0cb" />
              <stop offset=".75" stopColor="#29a8d4" />
              <stop offset="1" stopColor="#c9f7fd" />
            </linearGradient>
          </defs>
          <circle cx="18" cy="18" r="17" fill="url(#orb)" stroke="#4c6672" strokeWidth="1.5" />
          <circle cx="18" cy="18" r="15" fill="none" stroke="#6fc4dc" strokeWidth="1.5" strokeDasharray="5 2" />
          <path d="M8 15l4-3 4 1 4-2 11 2-1 6-3 8-8-1-4-3-6-2z" fill="#3e6a8d" />
          <path d="M8 15l13 2 10-4M21 17l-1 9M12 12l8 4M24 13l3 12" fill="none" stroke="#244661" />
          <path d="M5 25l3-1 5-5 5-1 7-7" fill="none" stroke="#c8e8f6" strokeWidth="2" />
        </svg>
        <h2>Accumulate Samples</h2>
        <Cap $bg="#1e90ff" $fg="#a7ff8d">i</Cap>
        <Cap $bg="#87cefa" $fg="#fff">[|]</Cap>
        <Cap $bg="#b0c4de" $fg="#4682b4" aria-label="Minimize">
          <svg width="10" height="12" viewBox="0 0 10 12" aria-hidden="true">
            <path d="M0 10h10" stroke="#4682b4" strokeWidth="2" />
          </svg>
        </Cap>
        <Cap $bg="#f08080" $fg="#fff">X</Cap>
      </DialogTitle>
      <DialogBody>
        <h3>Accumulate Samples</h3>
        <Group>
          <legend>Input</legend>
          <div>
            <label htmlFor="input-table">Table File</label>
            <Combo id="input-table" value="tambang_eval" width={124} soft />
          </div>
        </Group>
        <Group>
          <legend>Output</legend>
          <div>
            <label htmlFor="output-table">Table File</label>
            <Combo id="output-table" value="tambang_acc" width={124} soft />
          </div>
        </Group>
      </DialogBody>
      <DialogFooter>
        <Push $default>Ok</Push>
        <Push>Apply</Push>
        <Push>Cancel</Push>
      </DialogFooter>
    </DialogFrame>
  );
}

function Sidebar() {
  const [section, setSection] = useState("Explorer");
  return (
    <Side>
      <PanelHead>
        <Icon name="wheel" />
        <span>Navigation Bar</span>
        <PinClose />
      </PanelHead>
      <SideTitle>
        <Icon name="folder" size={18} />
        {section}
      </SideTitle>
      <SideTools>
        <Grip />
        {["home", "back", "next", "list"].map((n) => (
          <Tool key={n} aria-label={n} $wide><Icon name={n} /></Tool>
        ))}
        <Rule $tall />
        {["glassesOff", "layersPale", "handPale"].map((n) => (
          <Tool key={n} aria-label={n} $wide><Icon name={n} /></Tool>
        ))}
        <span />
        <Overflow faded />
      </SideTools>
      <SearchRow>
        <Combo id="Filter" value="All" grow soft icon="computer" />
        <SearchButton>Search <b>»</b></SearchButton>
      </SearchRow>
      <TreeBox>
        <ul>
          {tree.map(([label, icon, open]) => (
            <li key={label}>
              <Twisty aria-label={"Expand " + label} $show={open}>
                <svg width="6" height="9" viewBox="0 0 6 9" aria-hidden="true">
                  <path d="M.5 1v7L5 4.5z" fill="#fff" stroke="#999" />
                </svg>
              </Twisty>
              <Icon name={icon} size={15} />
              {label}
            </li>
          ))}
        </ul>
        <ScrollBar before={88} size={261} after={1} />
      </TreeBox>
      <SplitDots>
        <svg width="20" height="3" viewBox="0 0 20 3" aria-hidden="true">
          <path d="M1 1.5h18" stroke="#6f9ad6" strokeWidth="2" strokeDasharray="2 2" />
        </svg>
      </SplitDots>
      {sections.map(([label, icon]) => (
        <SectionButton key={label} $on={label === section} onClick={() => setSection(label)}>
          <Icon name={icon} size={18} />
          {label}
        </SectionButton>
      ))}
      <SideFoot />
    </Side>
  );
}

function Feedback() {
  return (
    <>
      <PanelHead>
        <Icon name="pad" />
        <span>Feedback</span>
        <PinClose />
      </PanelHead>
      <FeedbackBody>
        <LogTools>
          <Grip $vertical />
          <Buttons groups={[["floppy", "copy", "eraser", "print", "mail"]]} vertical />
          <span />
          <Overflow vertical faded />
        </LogTools>
        <LogBox>
          <ul>
            {log.map(([icon, text], i) => (
              <LogRow key={i} $on={i === log.length - 1}>
                <Icon name={icon} size={11} />
                {text}
              </LogRow>
            ))}
          </ul>
          <ScrollBar before={80} size={8} after={1} />
          <ScrollBar horizontal before={0} size={150} after={1058} />
        </LogBox>
      </FeedbackBody>
      <LogTabs>
        <Tab $bottom><Icon name="pad" />Feedback</Tab>
        <Tab $bottom $idle><Icon name="tracer" />Tracer</Tab>
        <Tab $bottom $idle><Icon name="clipboard" size={15} />Snapshot</Tab>
      </LogTabs>
    </>
  );
}

function App() {
  return (
    <Page>
      <GlobalStyle />
      <Menu>
        {menus.map((m) => <button key={m}>{m}</button>)}
      </Menu>
      <BarRow>
        {topBars.map((groups, i) => (
          <Bar key={i}>
            <Grip />
            <Buttons groups={groups} />
            <Overflow />
          </Bar>
        ))}
      </BarRow>
      <BarRow>
        <Bar><Grip /><Buttons groups={editBar} /><Overflow /></Bar>
        <Bar><Grip /><Buttons groups={snapBar} /><Overflow /></Bar>
        <Bar>
          <Grip />
          {["#fff", 2, 1, 0, 0].map((v, i) => (
            <Swatch key={i} aria-label="Line style" $fill={v === "#fff"} $line={v}>
              <span />
              <svg width="9" height="22" viewBox="0 0 9 22" aria-hidden="true">
                <path d="M2 11h5L4.5 13.5z" fill="#111" />
              </svg>
            </Swatch>
          ))}
          <Overflow />
        </Bar>
        <Bar><Grip /><Buttons groups={selectBar} /><Overflow /></Bar>
      </BarRow>

      <Work>
        <Sidebar />
        <Splitter />
        <Main>
          <TabRow>
            <Tab><Icon name="blocks" />BLOCKS</Tab>
            <Close />
          </TabRow>
          <Viewport>
            {[[0, 0], [50, 0], [100, 0], [0, 50], [100, 50], [0, 100], [50, 100], [100, 100]].map(([x, y]) => (
              <Handle key={x + "-" + y} $x={x} $y={y} />
            ))}
            <Axis width="100" height="90" viewBox="0 0 100 90" aria-label="Axes">
              <path d="M26 75V32" stroke="#7fff00" strokeWidth="4" />
              <path d="M26 15l5 19H21z" fill="#7fff00" />
              <path d="M26 74h44" stroke="#f00" strokeWidth="3" />
              <path d="M86 74l-20-5v10z" fill="#f00" />
              <circle cx="26" cy="74" r="5" fill="#00bfff" />
              <text x="25" y="12" fill="#9aff2a">Y</text>
              <text x="97" y="84" fill="#f00">X</text>
              <text x="25" y="84" fill="#5fcfff">Z</text>
            </Axis>
          </Viewport>
          <HSplit />
          <Feedback />
        </Main>
        <WindowTools>
          <Grip $vertical />
          <Buttons groups={windowBar} vertical />
          <span />
          <Overflow vertical />
        </WindowTools>
      </Work>

      <BarRow>
        <Bar>
          <Grip />
          <Caption htmlFor="Status">Status</Caption>
          <Combo id="Status" value="Ready..." width={313} color="#00f" />
          <Overflow />
        </Bar>
        <Bar>
          <Grip />
          <Caption htmlFor="Stowed">Stowed</Caption>
          <Combo id="Stowed" value="" width={306} />
          <Overflow />
        </Bar>
        <Bar>
          <Grip />
          <Caption htmlFor="Modules">Modules</Caption>
          <Combo id="Modules" value="Unload a design file in DXF format" width={299} icon="tick" />
          <Buttons groups={moduleBar} />
          <Overflow />
        </Bar>
        <Bar><Grip /><Buttons groups={cubeBar} /><Overflow /></Bar>
      </BarRow>
      <StatusBar>
        <output>485785.505, 9841880.058, 6796.993</output>
        <Rule />
        <label htmlFor="Viewport">Viewport:</label>
        <Combo id="Viewport" value="MAIN" width={125} />
        <Rule />
        <label htmlFor="Scale">Scale 1 :</label>
        <Combo id="Scale" value="28290" width={100} />
        <Rule />
        <label htmlFor="ActiveZ">Active Z:</label>
        <Combo id="ActiveZ" value="0.000" width={100} />
        <Rule />
        <span>Selected: 0</span>
      </StatusBar>
      <Dialog />
    </Page>
  );
}

export default App;

const GlobalStyle = createGlobalStyle`
  * {
    box-sizing: border-box;
  }
  body {
    margin: 0;
    background: #bfdbff;
    font: 11px "Noto Sans", "Open Sans", sans-serif;
    color: #111;
  }
  button, select {
    font: inherit;
    color: inherit;
    border: none;
    background: none;
    padding: 0;
    margin: 0;
  }
  ul {
    list-style: none;
    margin: 0;
    padding: 0;
  }
  svg {
    flex: none;
    display: block;
  }
`;
const Page = styled.div`
  position: relative;
  display: flex;
  flex-direction: column;
  height: 100vh;
  min-height: 700px;
  overflow: hidden;
`;
const Menu = styled.nav`
  display: flex;
  gap: 12px;
  height: 22px;
  padding: 0 0 2px 3px;
  button {
    white-space: nowrap;
  }
`;
const BarRow = styled.div`
  display: flex;
  gap: 3px;
  padding-left: 2px;
  margin-bottom: 1px;
`;
const Bar = styled.div`
  display: flex;
  align-items: center;
  height: 27px;
  border-radius: 3px;
  border-bottom: 1px solid #6f9fdb;
  background: linear-gradient(#e2edff, #cfe1fd 50%, #b1d0fb);
`;
const Grip = styled.i`
  flex: none;
  width: 8px;
  height: 17px;
  background: radial-gradient(circle at 3px 2px, #6f9ad6 1px, transparent 2px) 0 0 / 8px 4px;
  ${(p) =>
    p.$vertical &&
    css`
      width: 17px;
      height: 8px;
      background: radial-gradient(circle at 2px 4px, #6f9ad6 1px, transparent 2px) 0 0 / 4px 8px;
    `}
`;
const Tool = styled.button`
  flex: none;
  display: flex;
  align-items: center;
  justify-content: center;
  width: ${(p) => (p.$wide ? 25 : 24)}px;
  height: 24px;
  ${(p) =>
    p.$on &&
    css`
      border: 1px solid #8e8165;
      border-radius: 2px;
      background: linear-gradient(#fbdbb5, #fdc778 40%, #fdb04e 50%, #fee09a);
    `}
`;
const Rule = styled.i`
  flex: none;
  width: 2px;
  height: ${(p) => (p.$tall ? 22 : 16)}px;
  margin: 0 ${(p) => (p.$tall ? 4 : 2)}px;
  border-left: 1px solid #9cc0f0;
  border-right: 1px solid #fff;
  ${(p) =>
    p.$vertical &&
    css`
      width: 17px;
      height: 2px;
      margin: 2px 0 1px;
      border: none;
      border-top: 1px solid #9cc0f0;
      border-bottom: 1px solid #fff;
    `}
`;
const More = styled.button`
  flex: none;
  display: flex;
  align-items: flex-end;
  justify-content: center;
  width: 11px;
  height: 26px;
  margin-left: 2px;
  padding-bottom: 2px;
  border-radius: 0 3px 3px 0;
  background: linear-gradient(#c6dcfd, #7fa9e4);
  ${(p) =>
    p.$vertical &&
    css`
      width: 100%;
      height: 11px;
      margin: 0;
      padding: 0 4px 2px 0;
      justify-content: flex-end;
      border-radius: 0 0 3px 3px;
      background: linear-gradient(90deg, #c6dcfd, #8fb4e8);
    `}
`;
const Swatch = styled.button`
  display: flex;
  align-items: center;
  width: 32px;
  height: 24px;
  margin-right: 1px;
  border: 1px solid #999;
  background: #cfcfcf;
  span {
    flex: 1;
    height: 22px;
    border-right: 1px solid #999;
    background: ${(p) =>
      p.$fill
        ? "#fff"
        : `linear-gradient(#111, #111) center / 20px ${p.$line}px no-repeat`};
  }
`;
const Caption = styled.label`
  padding-right: 5px;
`;
const Field = styled.span`
  display: flex;
  align-items: center;
  width: ${(p) => (p.$width ? p.$width + "px" : "auto")};
  flex: ${(p) => (p.$grow ? "1" : "none")};
  height: 20px;
  background: #fff;
  color: ${(p) => p.$color || "#000"};
  border: ${(p) => (p.$soft ? "1px solid #888" : "1px solid #dce9fc")};
  > svg {
    margin-left: 2px;
  }
  select {
    appearance: none;
    flex: 1;
    min-width: 0;
    height: 18px;
    padding-left: 3px;
    outline: none;
  }
  > svg + select {
    padding-left: 5px;
  }
  i {
    display: flex;
    align-items: center;
    justify-content: center;
    width: ${(p) => (p.$soft ? 21 : 14)}px;
    height: 100%;
    border-left: ${(p) => (p.$soft ? "1px solid #888" : "none")};
    background: ${(p) =>
      p.$soft ? "linear-gradient(#f6f6f6, #d2d2d2)" : "linear-gradient(#d3e4fd, #94b7ea)"};
  }
`;
const Work = styled.div`
  flex: 1;
  min-height: 0;
  display: flex;
`;
const Side = styled.aside`
  flex: none;
  width: 270px;
  display: flex;
  flex-direction: column;
  background: #dcebff;
`;
const PanelHead = styled.header`
  flex: none;
  display: flex;
  align-items: center;
  gap: 2px;
  height: 18px;
  background: linear-gradient(#8daddb, #99bbeb);
  color: #111;
  span {
    flex: 1;
    padding-bottom: 2px;
  }
`;
const GlyphButton = styled.button`
  display: flex;
  justify-content: center;
  width: 17px;
`;
const SideTitle = styled.h1`
  flex: none;
  display: flex;
  align-items: center;
  gap: 7px;
  height: 32px;
  margin: 0;
  padding-left: 11px;
  font: bold 15px "Liberation Sans", Arial, sans-serif;
  color: #5480bd;
  background: linear-gradient(#e6f0ff, #b9d5fb);
`;
const SideTools = styled.div`
  flex: none;
  display: flex;
  align-items: center;
  height: 29px;
  margin-right: 3px;
  padding-left: 3px;
  border-bottom: 1px solid #6f9fdb;
  background: linear-gradient(#dfebff, #aecdf9);
  > span {
    flex: 1;
  }
`;
const SearchRow = styled.div`
  flex: none;
  display: flex;
  align-items: center;
  gap: 4px;
  height: 30px;
  padding: 0 5px 0 4px;
  font: 11px "Liberation Sans", Arial, sans-serif;
  select {
    padding-left: 3px;
  }
`;
const SearchButton = styled.button`
  display: flex;
  align-items: center;
  justify-content: center;
  gap: 7px;
  width: 69px;
  height: 25px;
  border: 1px solid #e6f1ff;
  border-radius: 4px;
  background: #cfe2ff;
  font: 11px "Noto Sans", sans-serif;
  b {
    color: #1515a0;
    font-size: 16px;
    font-weight: 500;
    line-height: 14px;
    padding-bottom: 3px;
  }
`;
const TreeBox = styled.div`
  flex: 1;
  min-height: 0;
  display: flex;
  margin-right: 3px;
  border: 1px solid #7f8794;
  background: #fff;
  font: 11px "Liberation Sans", Arial, sans-serif;
  color: #000;
  ul {
    flex: 1;
    display: flex;
    flex-direction: column;
  }
  li {
    flex: 1;
    display: flex;
    align-items: center;
    gap: 4px;
    padding-left: 7px;
    min-height: 0;
  }
`;
const Twisty = styled.button`
  width: 10px;
  display: flex;
  justify-content: center;
  visibility: ${(p) => (p.$show ? "visible" : "hidden")};
`;
const Track = styled.div`
  flex: none;
  display: flex;
  flex-direction: ${(p) => (p.$horizontal ? "row" : "column")};
  gap: 1px;
  padding: 1px;
  background: #efefef;
`;
const Space = styled.i`
  flex: ${(p) => p.$grow} 1 0;
`;
const Thumb = styled.i`
  flex: ${(p) => p.$grow} 1 0;
  border: 1px solid #888;
  border-radius: 2px;
  background: linear-gradient(${(p) => (p.$horizontal ? "180deg" : "90deg")}, #fafafa, #c6c6c6);
`;
const ScrollButton = styled.button`
  flex: none;
  display: flex;
  align-items: center;
  justify-content: center;
  width: 16px;
  height: 16px;
  border: 1px solid #777;
  border-radius: 2px;
  background: linear-gradient(#fbfbfb, #cdcdcd);
`;
const SplitDots = styled.div`
  flex: none;
  display: flex;
  align-items: center;
  justify-content: center;
  height: 7px;
  background: linear-gradient(#e3efff, #aecbf6);
`;
const SectionButton = styled.button`
  flex: none;
  display: flex;
  align-items: center;
  gap: 6px;
  height: 30px;
  padding-left: 4px;
  border-top: 1px solid #2a4f93;
  font: bold 11px "Liberation Sans", Arial, sans-serif;
  color: ${(p) => (p.$on ? "#000" : "#254f93")};
  background: ${(p) =>
    p.$on
      ? "linear-gradient(#ffd9a4, #ffc077 45%, #ffa63c 50%, #ffd56e)"
      : "linear-gradient(#d5e8ff, #c3dcfd 50%, #aacbf7 55%, #c2dcff)"};
`;
const SideFoot = styled.div`
  flex: none;
  height: 29px;
  border-top: 2px solid #5e8bcc;
  background: #afd0fe;
`;
const Splitter = styled.div`
  flex: none;
  width: 5px;
  border: solid #274a87;
  border-width: 0 1px;
  background: #8fb3e8;
`;
const Main = styled.main`
  flex: 1;
  min-width: 0;
  display: flex;
  flex-direction: column;
`;
const TabRow = styled.div`
  flex: none;
  display: flex;
  align-items: flex-end;
  justify-content: space-between;
  height: 24px;
  padding-left: 3px;
  border-bottom: 1px solid #7fa8e0;
  ${GlyphButton} {
    margin-bottom: 7px;
  }
`;
const Tab = styled.button`
  display: flex;
  align-items: center;
  gap: 3px;
  height: 21px;
  padding: 0 5px 0 2px;
  border: 1px solid #7fa8e0;
  border-bottom: none;
  border-radius: 3px 3px 0 0;
  background: linear-gradient(#fff, #e0edff);
  font-size: 12px;
  color: #173f86;
  ${(p) =>
    p.$bottom &&
    css`
      height: 19px;
      padding-right: 4px;
      border: 1px solid #fff;
      border-top: none;
      border-radius: 0 0 3px 3px;
      font-size: 11px;
    `}
  ${(p) =>
    p.$idle &&
    css`
      border-color: transparent;
      background: none;
      margin-left: 7px;
    `}
`;
const Viewport = styled.div`
  flex: 1;
  min-height: 0;
  position: relative;
  margin: 1px 1px 1px;
  border: 2px solid #00f;
  background: #000;
`;
const Handle = styled.i`
  position: absolute;
  left: ${(p) => p.$x}%;
  top: ${(p) => p.$y}%;
  width: 7px;
  height: 7px;
  margin: -3px;
  border: 1px solid #fff;
  border-radius: 50%;
  background: #000;
`;
const Axis = styled.svg`
  position: absolute;
  left: 682px;
  top: 57px;
  overflow: visible;
  text {
    font: bold 9px "DejaVu Sans", sans-serif;
  }
`;
const HSplit = styled.div`
  flex: none;
  height: 4px;
  border: solid #1f3f78;
  border-width: 1px 0;
  background: #8fb3e8;
`;
const FeedbackBody = styled.div`
  flex: none;
  display: flex;
  height: 150px;
  background: #e9f2ff;
  border-bottom: 1px solid #1d4da0;
`;
const LogTools = styled.div`
  display: flex;
  flex-direction: column;
  align-items: center;
  width: 29px;
  margin: 4px 1px 4px 0;
  background: linear-gradient(90deg, #dbe8fd, #b3d0fa);
  > span {
    flex: 1;
  }
`;
const LogBox = styled.div`
  flex: 1;
  display: grid;
  grid-template: 1fr 18px / 1fr 18px;
  row-gap: 1px;
  margin: 1px 0 2px;
  padding: 1px;
  border: 1px solid #7f8794;
  background: #fff;
  ul {
    display: flex;
    flex-direction: column;
  }
`;
const LogRow = styled.li`
  flex: 1;
  display: flex;
  align-items: center;
  gap: 11px;
  padding-left: 8px;
  font: 11px "Liberation Mono", "Courier New", monospace;
  color: #14286e;
  border: solid ${(p) => (p.$on ? "#c8c8c8" : "transparent")};
  border-width: ${(p) => (p.$on ? "1px 0" : "0")};
  background: ${(p) => (p.$on ? "linear-gradient(#f3f3f3, #dcdcdc)" : "none")};
`;
const LogTabs = styled.div`
  flex: none;
  display: flex;
  height: 21px;
  padding-left: 2px;
`;
const WindowTools = styled.div`
  flex: none;
  align-self: flex-start;
  display: flex;
  flex-direction: column;
  align-items: center;
  width: 29px;
  height: 485px;
  padding-top: 1px;
  border-left: 1px solid #bfdbff;
  border-radius: 3px;
  background: linear-gradient(90deg, #e2edff, #b1d0fb);
  > span {
    flex: 1;
  }
`;
const StatusBar = styled.footer`
  flex: none;
  display: flex;
  align-items: center;
  height: 24px;
  padding-left: 10px;
  color: #254f93;
  background: linear-gradient(#dfebff, #b5d3fc);
  output {
    margin-right: 4px;
    font-size: 12px;
  }
  label {
    padding: 0 4px 0 10px;
  }
  > span:last-child {
    padding-left: 10px;
  }
`;
const DialogFrame = styled.section`
  position: absolute;
  left: 50%;
  top: 281px;
  width: 298px;
  transform: translateX(-50%);
  border: 3px solid #6f9bd8;
  background: linear-gradient(120deg, #b4d4ff, #d9e8ff);
`;
const DialogTitle = styled.header`
  display: flex;
  align-items: center;
  gap: 2px;
  height: 38px;
  padding: 0 6px 0 1px;
  background: linear-gradient(90deg, #bfd9ff, #e2edff);
  h2 {
    flex: 1;
    margin: 0 0 0 4px;
    font-size: 11px;
    color: #00008b;
  }
`;
const Cap = styled.button`
  display: flex;
  align-items: center;
  justify-content: center;
  width: 22px;
  height: 22px;
  margin-bottom: 5px;
  border: 1px solid #5b6b80;
  border-radius: 4px;
  background: linear-gradient(rgba(255, 255, 255, 0.35), transparent) ${(p) => p.$bg};
  color: ${(p) => p.$fg};
  font-size: 11px;
`;
const DialogBody = styled.div`
  padding: 22px 6px 3px 15px;
  color: #000;
  h3 {
    margin: 0 0 14px 17px;
    font-size: 13px;
    line-height: 19px;
  }
`;
const Group = styled.fieldset`
  margin: 0 0 3px;
  padding: 0;
  border: 1px solid #888;
  border-radius: 2px;
  background: #fff;
  legend {
    float: left;
    width: 100%;
    height: 19px;
    padding: 0 4px;
    line-height: 19px;
    border-bottom: 1px solid #555;
    background: linear-gradient(#fff, #eee);
  }
  div {
    clear: both;
    display: flex;
    align-items: center;
    justify-content: flex-end;
    gap: 7px;
    height: 35px;
    padding: 3px 6px 0 0;
  }
  label {
    padding-top: 3px;
  }
`;
const DialogFooter = styled.footer`
  display: flex;
  align-items: center;
  gap: 8px;
  height: 40px;
  padding-left: 37px;
  background: linear-gradient(#f6f6f6, #e6e6e6 20%);
`;
const Push = styled.button`
  width: 73px;
  height: 20px;
  border: 1px solid #15252f;
  border-radius: 5px;
  background: linear-gradient(#eaf2fb 50%, #cdd8e2 50%);
  font-size: 12px;
  line-height: 16px;
  ${(p) =>
    p.$default &&
    css`
      border: 2px solid #5cb0f5;
      box-shadow: inset 0 0 0 1px #a5dcfb;
    `}
`;
